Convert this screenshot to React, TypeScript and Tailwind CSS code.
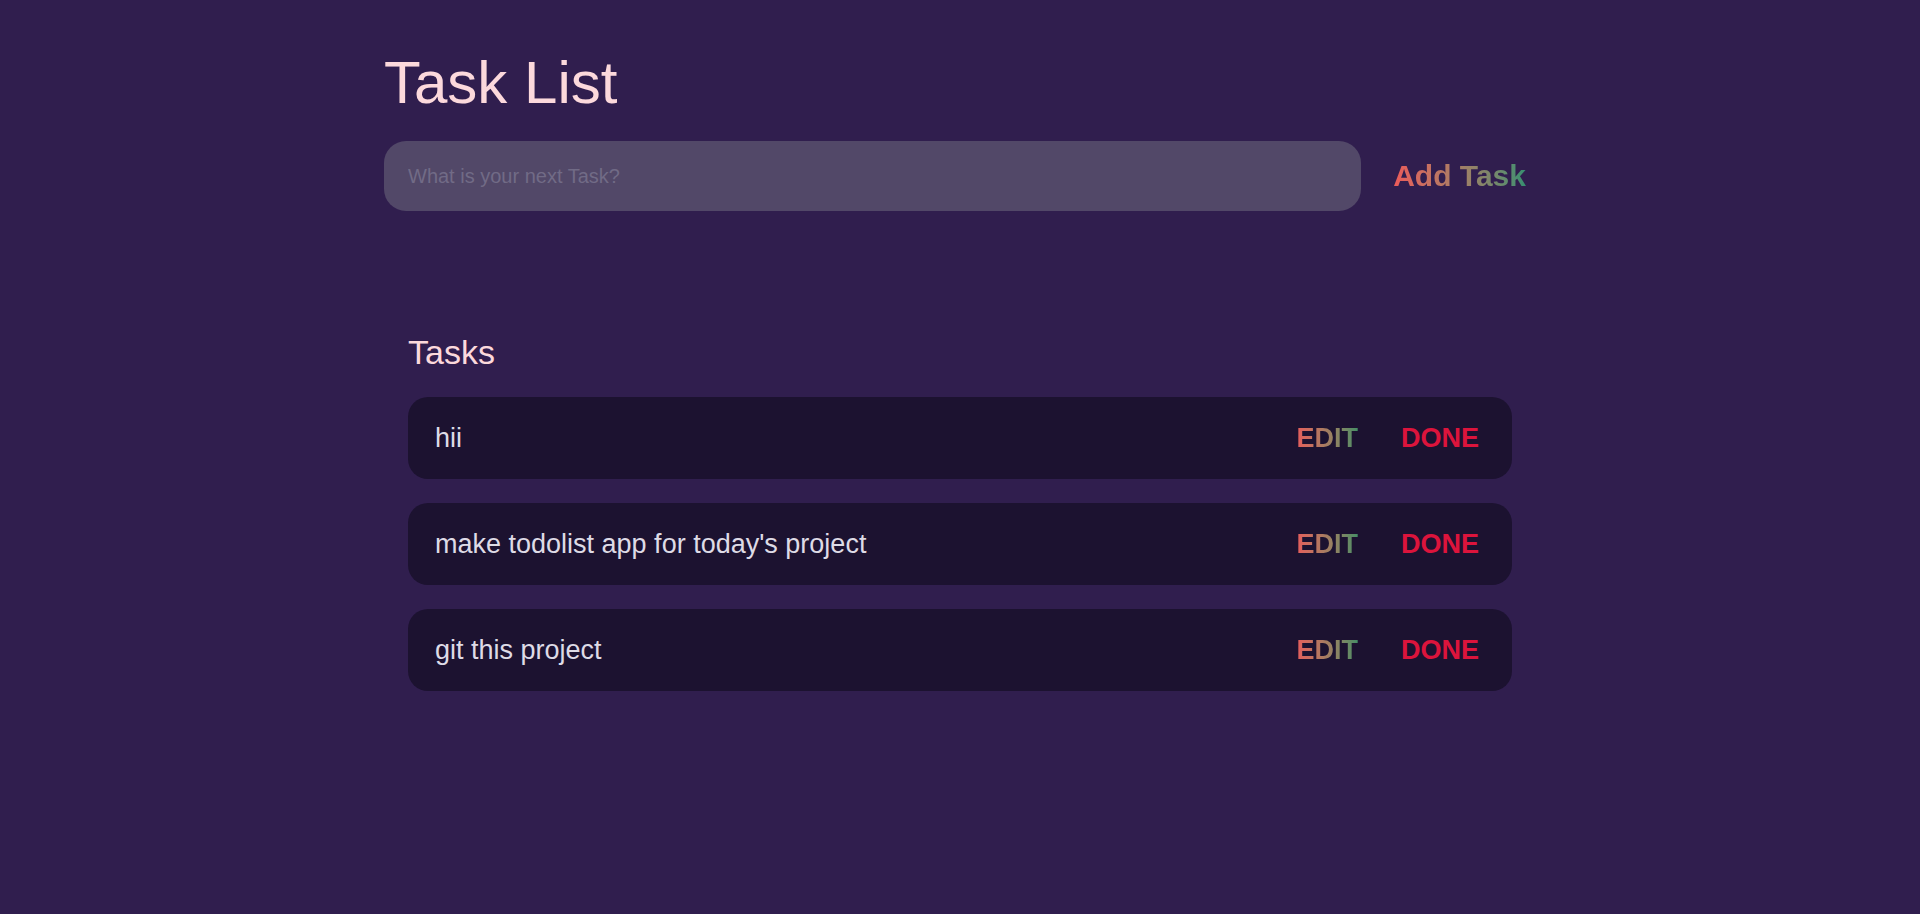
import React from "react";

const tasks = ["hii", "make todolist app for today's project", "git this project"];

export default function App() {
  return (
    <div
      className="min-h-screen w-full bg-[#301e4e]"
      style={{ fontFamily: '"Liberation Sans", Arial, sans-serif' }}
    >
      <div className="mx-auto w-[1152px] pt-[53px]">
        <h1 className="text-[60px] leading-[60px] font-normal text-[#fcd9dc]">Task List</h1>
        <div className="mt-[28px] flex items-center">
          <input
            type="text"
            placeholder="What is your next Task?"
            className="h-[70px] flex-1 rounded-[22px] bg-[#524868] px-[24px] text-[20px] text-[#e0dde8] outline-none placeholder:text-[#716b86]"
          />
          <button className="pl-[32px] pr-[10px] text-[30px] leading-[34px] font-bold">
            <span className="bg-linear-to-r from-[#ec5a5a] to-[#348f70] bg-clip-text text-transparent">
              Add Task
            </span>
          </button>
        </div>
        <div className="mt-[124px] px-[24px]">
          <h2 className="text-[34px] leading-[34px] font-normal text-[#fcd9dc]">Tasks</h2>
          <div className="mt-[28px] flex flex-col gap-[24px]">
            {tasks.map((t) => (
              <div
                key={t}
                className="flex h-[82px] items-center justify-between rounded-[20px] bg-[#1c1230] pl-[27px] pr-[33px]"
              >
                <span className="text-[27px] text-[#dedbe6]">{t}</span>
                <div className="flex items-center gap-[43px] text-[27px] font-bold">
                  <button>
                    <span className="bg-linear-to-r from-[#e65c5c] to-[#438e66] bg-clip-text text-transparent">
                      EDIT
                    </span>
                  </button>
                  <button className="text-[#dc143c]">DONE</button>
                </div>
              </div>
            ))}
          </div>
        </div>
      </div>
    </div>
  );
}
